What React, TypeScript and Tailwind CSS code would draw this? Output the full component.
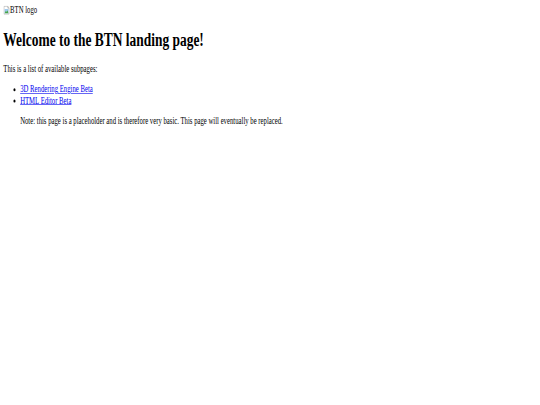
import * as React from "react"

// The reference is the browser's default rendering of a plain HTML page, squeezed:
// the flow below uses default-like sizes and the wrapper scales it into 540x405.

function BrokenImage() {
  return (
    <svg width="16" height="16" viewBox="0 0 16 16" className="inline-block align-[-2px]">
      <path d="M1.5 1.5h9l3 3v10h-12z" fill="#fff" stroke="#9a9a9a" />
      <path d="M10.5 1.5v3h3" fill="none" stroke="#9a9a9a" />
      <rect x="3" y="6" width="9" height="7" fill="#9cc9ee" />
      <path d="M3 13l3-4 2 2 2-3 2 5z" fill="#4aa548" />
    </svg>
  )
}

export default function App() {
  const pages = [
    { name: "3D Rendering Engine Beta", href: "#render" },
    { name: "HTML Editor Beta", href: "#editor" },
  ]

  return (
    <div className="w-[540px] h-[405px] overflow-hidden bg-white">
      <div className="w-[1286px] origin-top-left scale-x-[0.42] scale-y-[0.6] p-[8px] font-['Liberation_Serif',_serif] text-[16px] leading-[1.15] text-black">
        <div className="h-[18.4px]">
          <span className="inline-flex items-center">
            <BrokenImage />
            <span>BTN logo</span>
          </span>
        </div>

        <h1 className="mt-[21.44px] text-[32px] font-bold leading-[1.15]">Welcome to the BTN landing page!</h1>

        <p className="mt-[21.44px]">This is a list of available subpages:</p>

        <ul className="mt-[16px] list-disc pl-[40px]">
          {pages.map((page) => (
            <li key={page.href}>
              <a href={page.href} className="text-[#0000ee] underline">
                {page.name}
              </a>
            </li>
          ))}
          <p className="mt-[16px]">
            Note: this page is a placeholder and is therefore very basic. This page will eventually be replaced.
          </p>
        </ul>
      </div>
    </div>
  )
}
